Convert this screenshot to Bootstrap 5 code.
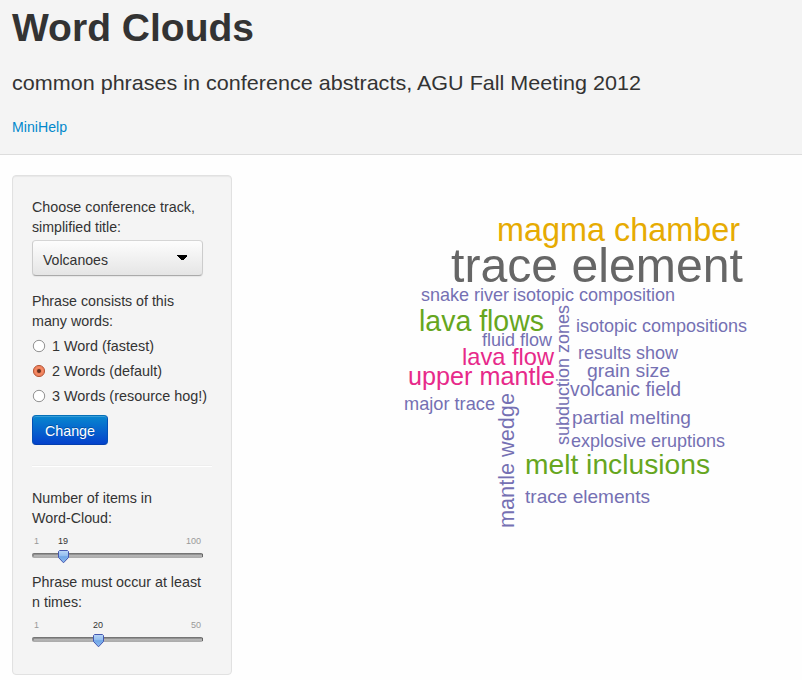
<!DOCTYPE html>
<html lang="en">
<head>
<meta charset="utf-8">
<meta name="viewport" content="width=device-width, initial-scale=1">
<title>Word Clouds</title>
<link href="https://cdn.jsdelivr.net/npm/bootstrap@5.3.0/dist/css/bootstrap.min.css" rel="stylesheet">
<style>
body{font-family:"Liberation Sans",Arial,sans-serif;font-size:14px;line-height:20px;color:#333;background:#fefefe;height:680px;overflow:hidden}
.page-head{height:155px;background:#f4f4f4;border-bottom:1px solid #ddd;padding:7px 12px 0}
.page-head h1{font-size:38.5px;line-height:40px;font-weight:700;margin:0 0 25px;color:#333}
.page-head h2{font-size:21px;line-height:22px;font-weight:400;margin:0 0 23px;color:#333;white-space:nowrap}
.page-head a{color:#08c;text-decoration:none}
.fit{display:block;overflow:visible;fill:currentColor}
a .fit,.side .fit{font-size:15px}
.side{width:220px;height:500px;margin:20px 0 0 12px;background:#f4f4f4;border:1px solid #e1e1e1;border-radius:4px;padding:21px 19px 0;box-shadow:inset 0 1px 1px rgba(0,0,0,.05)}
.track-select{width:171px;height:36px;margin-top:3px;padding:3px 15px 0 10px;border:1px solid #ccc;border-color:#d5d5d5 #ccc #aaa;border-radius:4px;background:linear-gradient(#fdfdfd,#e5e5e5);box-shadow:0 1px 1px rgba(0,0,0,.06);color:#333}
.phrase-label{margin:15px 0 4px}
.choice{height:20px;margin-bottom:5px;gap:6px;white-space:nowrap}
.choice .dot{margin-top:2px}
.change-btn{width:76px;height:30px;margin-top:10px;padding:0;font-size:14px;line-height:30px;color:#fff;border:1px solid;border-color:#0470b8 #0350b5 #033fae;border-radius:4px;background:linear-gradient(#0887cf,#0442cc);text-shadow:0 -1px 0 rgba(0,0,0,.25);box-shadow:inset 0 1px 0 rgba(255,255,255,.2)}
.rule{height:2px;border-top:1px solid #eee;background:#fff;margin:20px 0 21px}
.slide{height:44px}
</style>
<script src="https://cdn.jsdelivr.net/npm/bootstrap@5.3.0/dist/js/bootstrap.bundle.min.js"></script>
</head>
<body>
<header class="page-head">
  <h1><svg class="fit" width="260" height="40"><text lengthAdjust="spacingAndGlyphs" x="0" y="34" textLength="242">Word Clouds</text></svg></h1>
  <h2><svg class="fit" width="640" height="22"><text lengthAdjust="spacingAndGlyphs" x="0" y="18" textLength="629">common phrases in conference abstracts, AGU Fall Meeting 2012</text></svg></h2>
  <a href="#"><svg class="fit" width="60" height="20"><text lengthAdjust="spacingAndGlyphs" x="0" y="15" textLength="55">MiniHelp</text></svg></a>
</header>
<main class="d-flex">
  <form class="side flex-shrink-0">
    <svg class="fit" width="180" height="40"><text lengthAdjust="spacingAndGlyphs" x="0" y="15" textLength="163">Choose conference track,</text><text lengthAdjust="spacingAndGlyphs" x="0" y="35" textLength="89">simplified title:</text></svg>
    <div class="track-select d-flex justify-content-between align-items-center">
      <svg class="fit" width="70" height="20"><text lengthAdjust="spacingAndGlyphs" x="0" y="15" textLength="65">Volcanoes</text></svg>
      <svg width="10" height="5" class="mb-1" shape-rendering="crispEdges"><path d="M0 0H10V1L6 5H4L0 1Z" fill="#000"/></svg>
    </div>
    <svg class="fit phrase-label" width="180" height="40"><text lengthAdjust="spacingAndGlyphs" x="0" y="15" textLength="142">Phrase consists of this</text><text lengthAdjust="spacingAndGlyphs" x="0" y="35" textLength="81">many words:</text></svg>
    <div>
      <div class="choice d-flex align-items-center"><svg class="dot" width="14" height="14"><circle cx="7" cy="7" r="5.7" fill="#fff" stroke="#919191"/></svg><svg class="fit" width="156" height="20"><text lengthAdjust="spacingAndGlyphs" x="0" y="16" textLength="102">1 Word (fastest)</text></svg></div>
      <div class="choice d-flex align-items-center"><svg class="dot" width="14" height="14"><circle cx="7" cy="7" r="5.6" fill="#ee7f59" stroke="#b65a3d"/><circle cx="7" cy="7" r="3.6" fill="none" stroke="#f58e6a"/><circle cx="7" cy="7" r="2" fill="#63301f"/></svg><svg class="fit" width="156" height="20"><text lengthAdjust="spacingAndGlyphs" x="0" y="16" textLength="110">2 Words (default)</text></svg></div>
      <div class="choice d-flex align-items-center"><svg class="dot" width="14" height="14"><circle cx="7" cy="7" r="5.7" fill="#fff" stroke="#919191"/></svg><svg class="fit" width="156" height="20"><text lengthAdjust="spacingAndGlyphs" x="0" y="16" textLength="155">3 Words (resource hog!)</text></svg></div>
    </div>
    <button type="button" class="btn change-btn d-block"><svg class="fit mx-auto" width="50" height="28"><text lengthAdjust="spacingAndGlyphs" x="0" y="20" textLength="50">Change</text></svg></button>
    <div class="rule"></div>
    <svg class="fit" width="180" height="40"><text lengthAdjust="spacingAndGlyphs" x="0" y="15" textLength="120">Number of items in</text><text lengthAdjust="spacingAndGlyphs" x="0" y="35" textLength="80">Word-Cloud:</text></svg>
    <div class="slide">
      <svg class="fit" width="171" height="44"><use href="#groove"/><g font-size="9"><text x="2" y="16" fill="#999">1</text><text x="26" y="16" fill="#333">19</text><text x="154" y="16" fill="#999" textLength="15">100</text></g><use href="#thumb" x="26"/></svg>
    </div>
    <svg class="fit" width="180" height="40"><text lengthAdjust="spacingAndGlyphs" x="0" y="15" textLength="169">Phrase must occur at least</text><text lengthAdjust="spacingAndGlyphs" x="0" y="35" textLength="50">n times:</text></svg>
    <div class="slide">
      <svg class="fit" width="171" height="44"><use href="#groove"/><g font-size="9"><text x="2" y="16" fill="#999">1</text><text x="61" y="16" fill="#333">20</text><text x="159" y="16" fill="#999">50</text></g><use href="#thumb" x="61"/></svg>
    </div>
  </form>
  <!-- the cloud's coordinates are page coordinates, offset by the viewBox -->
  <svg class="flex-shrink-0" width="570" height="525" viewBox="232 155 570 525" fill="#7570b3">
    <text lengthAdjust="spacingAndGlyphs" x="497" y="241" font-size="34" fill="#e6ab02" textLength="243">magma chamber</text>
    <text lengthAdjust="spacingAndGlyphs" x="451" y="282" font-size="48" fill="#666" textLength="292">trace element</text>
    <text lengthAdjust="spacingAndGlyphs" x="421" y="301" font-size="18.5" textLength="88">snake river</text>
    <text lengthAdjust="spacingAndGlyphs" x="513" y="301" font-size="18.5" textLength="162">isotopic composition</text>
    <text lengthAdjust="spacingAndGlyphs" x="419" y="331" font-size="29.5" fill="#66a61e" textLength="125">lava flows</text>
    <text lengthAdjust="spacingAndGlyphs" x="482" y="346" font-size="18.5" textLength="70">fluid flow</text>
    <text lengthAdjust="spacingAndGlyphs" x="462" y="365" font-size="24" fill="#e7298a" textLength="92">lava flow</text>
    <text lengthAdjust="spacingAndGlyphs" x="408" y="385" font-size="25" fill="#e7298a" textLength="147">upper mantle</text>
    <text lengthAdjust="spacingAndGlyphs" x="404" y="410" font-size="18.5" textLength="91">major trace</text>
    <text lengthAdjust="spacingAndGlyphs" x="576" y="332" font-size="18.5" textLength="171">isotopic compositions</text>
    <text lengthAdjust="spacingAndGlyphs" x="578" y="359" font-size="18.5" textLength="100">results show</text>
    <text lengthAdjust="spacingAndGlyphs" x="587" y="377" font-size="19" textLength="83">grain size</text>
    <text lengthAdjust="spacingAndGlyphs" x="570" y="396" font-size="19.5" textLength="111">volcanic field</text>
    <text lengthAdjust="spacingAndGlyphs" x="572" y="424" font-size="19" textLength="119">partial melting</text>
    <text lengthAdjust="spacingAndGlyphs" x="571" y="447" font-size="18.5" textLength="154">explosive eruptions</text>
    <text lengthAdjust="spacingAndGlyphs" x="525" y="474" font-size="28" fill="#66a61e" textLength="185">melt inclusions</text>
    <text lengthAdjust="spacingAndGlyphs" x="525" y="503" font-size="18.5" textLength="125">trace elements</text>
    <text lengthAdjust="spacingAndGlyphs" transform="translate(569 445) rotate(-90)" font-size="18" textLength="140">subduction zones</text>
    <text lengthAdjust="spacingAndGlyphs" transform="translate(514 528) rotate(-90)" font-size="22" textLength="135">mantle wedge</text>
  </svg>
</main>
<svg class="d-block" width="0" height="0" aria-hidden="true">
  <defs>
    <linearGradient id="blue" x1="0" y1="0" x2="0" y2="1"><stop offset="0" stop-color="#b9d6f6"/><stop offset=".45" stop-color="#91bdf0"/><stop offset=".5" stop-color="#6fa5e6"/><stop offset="1" stop-color="#8ebdf2"/></linearGradient>
    <linearGradient id="grey" x1="0" y1="0" x2="0" y2="1"><stop offset="0" stop-color="#666"/><stop offset=".35" stop-color="#999"/><stop offset=".5" stop-color="#b5b5b5"/><stop offset="1" stop-color="#aaa"/></linearGradient>
    <g id="groove"><rect x="0" y="25" width="171" height="5" rx="2" fill="url(#grey)"/><path d="M1 26.5V28.5M170.5 26V29" stroke="#666"/></g>
    <g id="thumb"><path d="M1.5 22.5H9.5L10.5 23.5V29.5L5.5 34.8L.5 29.5V23.5Z" fill="url(#blue)" stroke="#4557b0" stroke-linejoin="round"/></g>
  </defs>
</svg>
</body>
</html>
